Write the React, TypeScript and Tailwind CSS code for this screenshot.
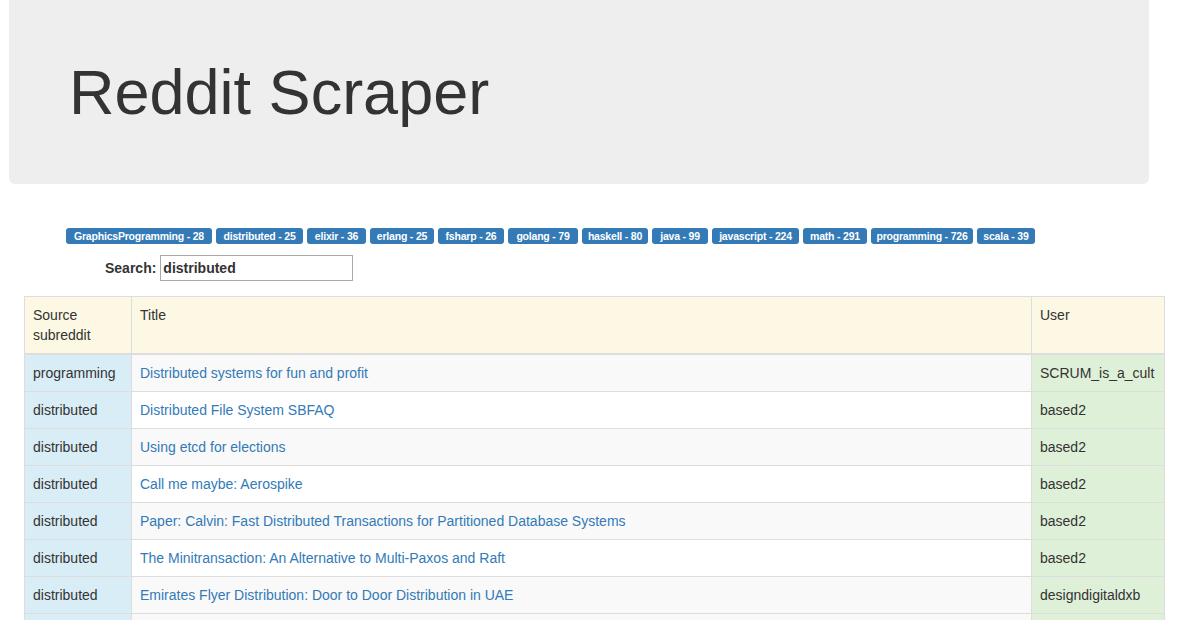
const labels = [
  { name: "GraphicsProgramming", count: 28, w: "w-[146px]" },
  { name: "distributed", count: 25, w: "w-[87px]" },
  { name: "elixir", count: 36, w: "w-[59px]" },
  { name: "erlang", count: 25, w: "w-[64px]" },
  { name: "fsharp", count: 26, w: "w-[66px]" },
  { name: "golang", count: 79, w: "w-[70px]" },
  { name: "haskell", count: 80, w: "w-[66px]" },
  { name: "java", count: 99, w: "w-[56px]" },
  { name: "javascript", count: 224, w: "w-[87px]" },
  { name: "math", count: 291, w: "w-[64px]" },
  { name: "programming", count: 726, w: "w-[102px]" },
  { name: "scala", count: 39, w: "w-[58px]" },
];

const posts = [
  { sub: "programming", title: "Distributed systems for fun and profit", user: "SCRUM_is_a_cult" },
  { sub: "distributed", title: "Distributed File System SBFAQ", user: "based2" },
  { sub: "distributed", title: "Using etcd for elections", user: "based2" },
  { sub: "distributed", title: "Call me maybe: Aerospike", user: "based2" },
  {
    sub: "distributed",
    title: "Paper: Calvin: Fast Distributed Transactions for Partitioned Database Systems",
    user: "based2",
  },
  { sub: "distributed", title: "The Minitransaction: An Alternative to Multi-Paxos and Raft", user: "based2" },
  { sub: "distributed", title: "Emirates Flyer Distribution: Door to Door Distribution in UAE", user: "designdigitaldxb" },
];

export default function App() {
  return (
    <div className="min-h-screen bg-white text-[#333] text-[14px] leading-[20px] font-['Liberation_Sans',Arial,sans-serif]">
      <div className="ml-[9px] w-[1140px] h-[184px] bg-[#eee] rounded-b-[6px] pl-[60px] pt-[58px]">
        <h1 className="text-[63px] leading-[69px] font-normal text-[#333]">Reddit Scraper</h1>
      </div>

      <div className="mt-[44px] pl-[66px] flex gap-[4px]">
        {labels.map((l) => (
          <span
            key={l.name}
            className={`${l.w} h-[16px] flex items-center justify-center whitespace-nowrap bg-[#337ab7] text-white text-[10.5px] font-bold rounded-[3px] tracking-[-0.2px]`}
          >
            {l.name} - {l.count}
          </span>
        ))}
      </div>

      <div className="mt-[11px] pl-[105px] flex items-center gap-[4px]">
        <span className="font-bold">Search:</span>
        <div className="w-[193px] h-[26px] border border-[#a9a9a9] flex items-center pl-[2px] font-bold">
          distributed
        </div>
      </div>

      <div className="mt-[15px] ml-[24px] w-[1140px]">
        <table className="table-fixed w-[1140px] border-collapse border border-[#ddd]">
          <colgroup>
            <col className="w-[107px]" />
            <col className="w-[900px]" />
            <col className="w-[133px]" />
          </colgroup>
          <thead>
            <tr className="bg-[#fcf8e3]">
              <th className="border border-[#ddd] border-b-2 p-[8px] text-left font-normal align-top">
                Source subreddit
              </th>
              <th className="border border-[#ddd] border-b-2 p-[8px] text-left font-normal align-top">Title</th>
              <th className="border border-[#ddd] border-b-2 p-[8px] text-left font-normal align-top">User</th>
            </tr>
          </thead>
          <tbody>
            {posts.map((p, i) => (
              <tr key={i}>
                <td className="border border-[#ddd] p-[8px] bg-[#d9edf7] whitespace-nowrap">{p.sub}</td>
                <td className={`border border-[#ddd] p-[8px] ${i % 2 === 0 ? "bg-[#f9f9f9]" : "bg-white"}`}>
                  <a className="text-[#337ab7]" href="#">
                    {p.title}
                  </a>
                </td>
                <td className="border border-[#ddd] p-[8px] bg-[#dff0d8] whitespace-nowrap">{p.user}</td>
              </tr>
            ))}
            <tr>
              <td className="border border-[#ddd] h-[37px] bg-[#d9edf7]"></td>
              <td className="border border-[#ddd] h-[37px] bg-[#f9f9f9]"></td>
              <td className="border border-[#ddd] h-[37px] bg-[#dff0d8]"></td>
            </tr>
          </tbody>
        </table>
      </div>
    </div>
  );
}
